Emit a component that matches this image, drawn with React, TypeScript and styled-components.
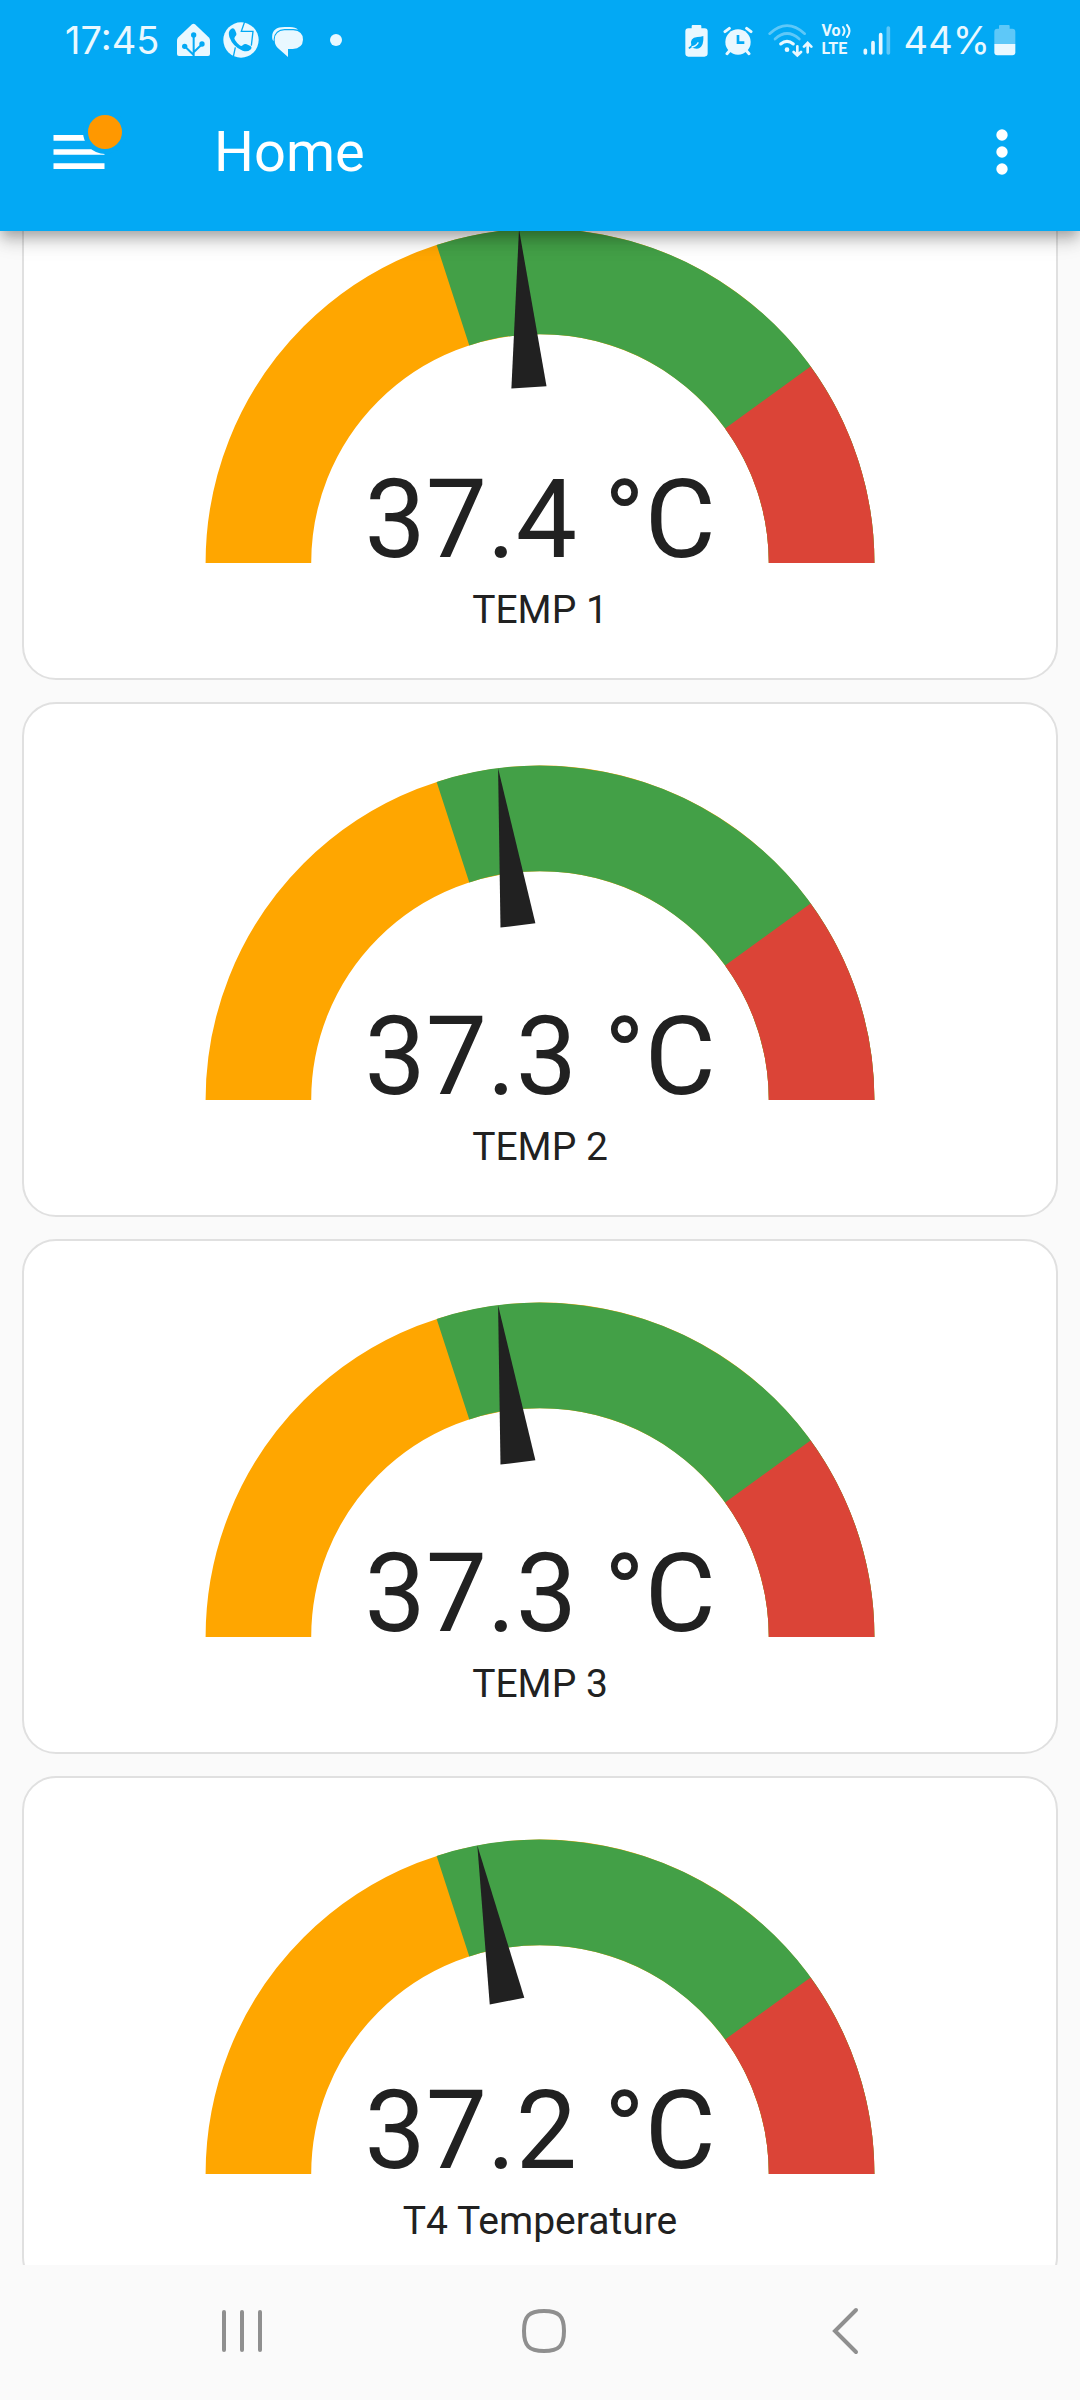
import React, { useLayoutEffect, useRef } from "react";
import styled, { createGlobalStyle } from "styled-components";

const color = {
  primary: "#03a9f4",
  page: "#fafafa",
  card: "#ffffff",
  divider: "#e0e0e0",
  text: "#212121",
  warning: "#ffa600",
  success: "#43a047",
  error: "#db4437",
  badge: "#ff9800",
  status: "#e9f8ff",
  nav: "#8f8f8f",
};

const GlobalStyle = createGlobalStyle`
  *, *::before, *::after { box-sizing: border-box; }
  body {
    margin: 0;
    background: ${color.page};
    color: ${color.text};
    font-family: Roboto, "Noto Sans", sans-serif;
  }
`;

const Screen = styled.div`
  display: flex;
  flex-direction: column;
  height: 100vh;
  background: ${color.page};
`;

const Header = styled.header`
  position: relative;
  z-index: 1;
  flex: none;
  background: ${color.primary};
  color: #fff;
  box-shadow:
    0 6px 11px -3px rgba(0, 0, 0, 0.2),
    0 11px 14px 0 rgba(0, 0, 0, 0.14),
    0 3px 28px 0 rgba(0, 0, 0, 0.12);
`;

const StatusBar = styled.div`
  display: flex;
  align-items: center;
  justify-content: space-between;
  height: 73px;
  padding: 7px 64px 0 65px;
  color: ${color.status};
  font-family: Inter, Roboto, sans-serif;
`;

const StatusGroup = styled.div<{ $gap: number }>`
  display: flex;
  align-items: center;
  gap: ${(p) => p.$gap}px;
`;

const StatusText = styled.span`
  font-size: 38px;
  line-height: 46px;
`;

const StatusSvg = styled.svg`
  display: block;
  flex: none;
  height: 36px;
  fill: currentColor;
`;

const MoreDot = styled.span`
  width: 12px;
  height: 12px;
  margin-left: 14px;
  border-radius: 50%;
  background: currentColor;
`;

const Lte = styled.span`
  display: flex;
  flex-direction: column;
  font: 700 16px/18px Roboto, "Noto Sans", sans-serif;
`;

const LteRow = styled.span`
  display: flex;
  align-items: center;
`;

const Waves = styled.svg`
  width: 10px;
  height: 18px;
  fill: none;
  stroke: currentColor;
  stroke-width: 2;
  stroke-linecap: round;
`;

const Toolbar = styled.div`
  display: flex;
  align-items: center;
  height: 158px;
  padding: 0 11px;
`;

const IconButton = styled.button`
  position: relative;
  display: flex;
  align-items: center;
  justify-content: center;
  width: 135px;
  height: 135px;
  padding: 0;
  border: 0;
  background: none;
  color: inherit;
  cursor: pointer;

  svg {
    width: 68px;
    height: 68px;
    fill: currentColor;
  }
`;

const Badge = styled.span`
  position: absolute;
  top: 25px;
  right: 19px;
  width: 44px;
  height: 44px;
  border: 5px solid ${color.primary};
  border-radius: 50%;
  background: ${color.badge};
`;

const Title = styled.h1`
  flex: 1;
  margin: 0;
  padding-left: 68px;
  font-size: 56px;
  font-weight: 400;
  line-height: 64px;
`;

const Content = styled.main`
  flex: 1;
  min-height: 0;
  overflow-y: auto;
  scrollbar-width: none;
`;

const CardList = styled.div`
  display: flex;
  flex-direction: column;
  gap: 22px;
  padding: 22px;
`;

const Card = styled.section`
  display: flex;
  flex-direction: column;
  align-items: center;
  padding: 44px;
  border: 2px solid ${color.divider};
  border-radius: 34px;
  background: ${color.card};
`;

const Gauge = styled.div`
  display: grid;
  width: 100%;
  max-width: 704px;

  > * {
    grid-area: 1 / 1;
  }
`;

const Dial = styled.svg`
  display: block;
  width: 100%;
`;

const Value = styled.div`
  align-self: end;
  justify-self: center;
  font-size: 109px;
  line-height: 86px;
  white-space: nowrap;
`;

const Label = styled.h2`
  margin: 24px 0 0;
  font-size: 39px;
  font-weight: 400;
  line-height: 47px;
`;

const NavBar = styled.nav`
  display: flex;
  flex: none;
  align-items: center;
  justify-content: center;
  height: 135px;
  padding: 0 0 3px 8px;
`;

const NavButton = styled.button`
  display: flex;
  flex: 0 1 302px;
  align-items: center;
  justify-content: center;
  height: 100%;
  padding: 0;
  border: 0;
  background: none;
  color: ${color.nav};
  cursor: pointer;

  svg {
    width: 48px;
    height: 48px;
    fill: none;
    stroke: currentColor;
    stroke-width: 4;
    stroke-linecap: round;
  }
`;

const SCALE_MIN = 35;
const SCALE_MAX = 40;

const toAngle = (value: number) =>
  ((value - SCALE_MIN) / (SCALE_MAX - SCALE_MIN)) * 180;

const arcPoint = (angle: number) => {
  const rad = (angle * Math.PI) / 180;
  return `${-40 * Math.cos(rad)} ${-40 * Math.sin(rad)}`;
};

const segments = [
  { from: 35, to: 40, stroke: color.warning },
  { from: 37, to: 40, stroke: color.success },
  { from: 39, to: 40, stroke: color.error },
];

const sensors = [
  { name: "TEMP 1", value: 37.4 },
  { name: "TEMP 2", value: 37.3 },
  { name: "TEMP 3", value: 37.3 },
  { name: "T4 Temperature", value: 37.2 },
];

function GaugeCard({ name, value }: { name: string; value: number }) {
  return (
    <Card>
      <Gauge>
        <Dial viewBox="-50 -50 100 50" aria-hidden="true">
          {segments.map((s) => (
            <path
              key={s.from}
              d={`M ${arcPoint(toAngle(s.from))} A 40 40 0 0 1 ${arcPoint(toAngle(s.to))}`}
              fill="none"
              stroke={s.stroke}
              strokeWidth="15"
            />
          ))}
          <path
            d="M -25 -2.5 L -47.5 0 L -25 2.5 Z"
            fill={color.text}
            transform={`rotate(${toAngle(value)})`}
          />
        </Dial>
        <Value>{value} °C</Value>
      </Gauge>
      <Label>{name}</Label>
    </Card>
  );
}

function NotificationIcons() {
  return (
    <StatusGroup $gap={13}>
      <StatusSvg viewBox="21 21 99 108" width="33" aria-hidden="true">
        <path d="M66 28Q70.500 24 75 28L116 67Q120 71 120 76V117Q120 123 114 123H27Q21 123 21 117V76Q21 71 25 67Z" />
        <g stroke={color.primary} strokeWidth="6" fill="none">
          <path d="M71 62V123M71 120L44 94M71 112L96 88" />
        </g>
        <g fill={color.primary}>
          <circle cx="71" cy="60" r="8" />
          <circle cx="44" cy="94" r="8" />
          <circle cx="96" cy="87" r="8" />
        </g>
      </StatusSvg>
      <StatusSvg viewBox="158 21 108 108" width="36" aria-hidden="true">
        <circle cx="212" cy="75" r="53" />
        <path
          d="M223 20L213 49H248L243 92M195 97L188 130"
          fill="none"
          stroke={color.primary}
          strokeWidth="4"
        />
        <path
          d="M182 42Q190 37 194 45L198 55Q200 61 194 65Q190 69 194 75Q200 85 208 91Q213 95 217 91Q223 85 229 88L240 93Q247 98 240 104Q231 112 217 107Q188 96 177 66Q172 50 182 42Z"
          fill={color.primary}
        />
      </StatusSvg>
      <StatusSvg viewBox="306 21 93 108" width="31" aria-hidden="true">
        <path d="M307 72Q302 36 344 36H360Q377 36 384 44Q378 42 370 42H344Q314 43 311 72V78Q308 76 307 72Z" />
        <path d="M343 46H370Q399 48 399 74Q398 100 368 102H354V126L326 101Q314 92 314 74Q315 48 343 46Z" />
      </StatusSvg>
      <MoreDot />
    </StatusGroup>
  );
}

function DeviceIcons() {
  return (
    <StatusGroup $gap={15}>
      <StatusSvg viewBox="23 21 69 108" width="23" aria-hidden="true">
        <path d="M46 30H69Q72 30 72 33V40H82Q91 40 91 49V115Q91 125 81 125H33Q24 125 24 115V49Q24 40 33 40H43V33Q43 30 46 30Z" />
        <path
          d="M78 63Q80 100 58 101Q48 101 44 97L36 102L33 98L42 91Q36 68 60 66Q70 66 78 63Z"
          fill={color.primary}
        />
        <path d="M43 96Q56 94 63 82" fill="none" stroke="currentColor" strokeWidth="4" />
      </StatusSvg>
      <StatusSvg viewBox="139 21 90 108" width="30" aria-hidden="true">
        <circle cx="184" cy="81" r="38" />
        <g fill="none" stroke="currentColor" strokeWidth="9" strokeLinecap="round">
          <path d="M145 50L158 40M223 50L210 40M160 106L151 116M208 106L217 116" />
        </g>
        <path d="M184 60V83H203" fill="none" stroke={color.primary} strokeWidth="8" />
      </StatusSvg>
      <StatusSvg viewBox="272 21 135 108" width="45" aria-hidden="true">
        <g fill="none" stroke="currentColor" strokeLinecap="round" strokeWidth="8">
          <path d="M277 56Q329 8 382 56" opacity="0.4" />
          <path d="M293 72Q329 39 366 72" opacity="0.4" />
          <path d="M310 87Q329 71 348 87" strokeWidth="9" />
          <path d="M360 94V119M349 111L360 121L371 111M391 112V86M380 95L391 84L402 95" />
        </g>
        <circle cx="329" cy="104" r="7" />
      </StatusSvg>
    </StatusGroup>
  );
}

function NetworkIcons() {
  return (
    <StatusGroup $gap={12}>
      <Lte>
        <LteRow>
          Vo
          <Waves viewBox="0 0 10 18" aria-hidden="true">
            <path d="M2 5Q5 9 2 13M6 3Q11 9 6 15" />
          </Waves>
        </LteRow>
        <LteRow>LTE</LteRow>
      </Lte>
      <StatusSvg viewBox="563 21 84 108" width="28" aria-hidden="true">
        <g fill="none" stroke="currentColor" strokeWidth="11" strokeLinecap="round">
          <path d="M570 106V114M593 83V114M616 59V114" />
          <path d="M639 39V114" opacity="0.4" />
        </g>
      </StatusSvg>
    </StatusGroup>
  );
}

function BatteryLevel() {
  return (
    <StatusGroup $gap={4}>
      <StatusText>44%</StatusText>
      <StatusSvg viewBox="959 21 66 108" width="22" aria-hidden="true">
        <path
          d="M977 30H1003Q1006 30 1006 33V41H1014Q1023 41 1023 50V87H960V50Q960 41 969 41H974V33Q974 30 977 30Z"
          opacity="0.4"
        />
        <path d="M960 87H1023V112Q1023 121 1014 121H969Q960 121 960 112Z" />
      </StatusSvg>
    </StatusGroup>
  );
}

export default function App() {
  const content = useRef<HTMLElement>(null);

  // The list opens slightly scrolled, with the first card tucked under the header.
  useLayoutEffect(() => {
    if (content.current) content.current.scrollTop = 88;
  }, []);

  return (
    <Screen>
      <GlobalStyle />
      <Header>
        <StatusBar>
          <StatusGroup $gap={18}>
            <StatusText>17:45</StatusText>
            <NotificationIcons />
          </StatusGroup>
          <StatusGroup $gap={13}>
            <StatusGroup $gap={8}>
              <DeviceIcons />
              <NetworkIcons />
            </StatusGroup>
            <BatteryLevel />
          </StatusGroup>
        </StatusBar>
        <Toolbar>
          <IconButton aria-label="Open menu">
            <svg viewBox="0 0 24 24" aria-hidden="true">
              <path d="M3 6H21V8H3V6M3 11H21V13H3V11M3 16H21V18H3V16Z" />
            </svg>
            <Badge />
          </IconButton>
          <Title>Home</Title>
          <IconButton aria-label="More options">
            <svg viewBox="0 0 24 24" aria-hidden="true">
              <circle cx="12" cy="6" r="2" />
              <circle cx="12" cy="12" r="2" />
              <circle cx="12" cy="18" r="2" />
            </svg>
          </IconButton>
        </Toolbar>
      </Header>
      <Content ref={content}>
        <CardList>
          {sensors.map((s) => (
            <GaugeCard key={s.name} {...s} />
          ))}
        </CardList>
      </Content>
      <NavBar>
        <NavButton aria-label="Recent apps">
          <svg viewBox="0 0 48 48" aria-hidden="true">
            <path d="M6 5V43M24 5V43M42 5V43" />
          </svg>
        </NavButton>
        <NavButton aria-label="Home screen">
          <svg viewBox="0 0 48 48" aria-hidden="true">
            <path d="M24 4C39 4 44 9 44 24S39 44 24 44S4 39 4 24S9 4 24 4Z" />
          </svg>
        </NavButton>
        <NavButton aria-label="Back">
          <svg viewBox="0 0 48 48" aria-hidden="true">
            <path d="M34 3L13 24L34 45" />
          </svg>
        </NavButton>
      </NavBar>
    </Screen>
  );
}
